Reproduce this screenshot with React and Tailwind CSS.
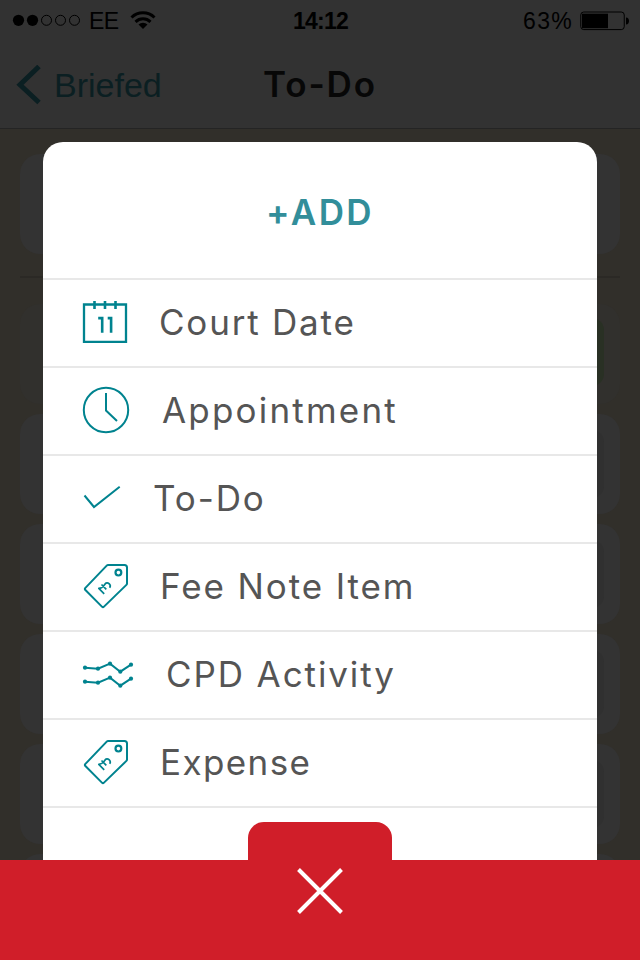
const ICON = 'fill-none stroke-[#00838f]';

const CalendarIcon = () => (
  <svg className={ICON} width="46" height="44" viewBox="0 0 46 44" strokeWidth="2.3">
    <path d="M2 4.5h42v37.300H2z" />
    <path d="M12.5 1v8M23 1v8M33.5 1v8" strokeWidth="2.6" />
    <path d="M16.2 18.100h4V32.800M25.700 18.100h3.400V32.800" strokeWidth="2.6" />
  </svg>
);

const ClockIcon = () => (
  <svg className={ICON} width="48" height="48" viewBox="0 0 48 48" strokeWidth="2">
    <circle cx="24" cy="24" r="22.2" />
    <path d="M24 7v17.500l11 10.500" />
  </svg>
);

const TickIcon = () => (
  <svg className={ICON} width="38" height="26" viewBox="0 0 38 26" strokeWidth="2">
    <path d="M1.500 10.500 11 22 36.700 1.800" />
  </svg>
);

const TagIcon = () => (
  <svg className={ICON} width="46" height="46" viewBox="0 0 46 46" strokeWidth="2" strokeLinejoin="round">
    <path d="M25.200 2H41.500a2.500 2.500 0 0 1 2.500 2.500V20.500a2 2 0 0 1-.6 1.400L21 43.600a1.500 1.500 0 0 1-2.100 0L2.400 27a1.500 1.500 0 0 1 0-2.100L23.700 2.600A2 2 0 0 1 25.200 2z" />
    <circle cx="35.4" cy="9.6" r="2.9" strokeWidth="2.2" />
    <g transform="translate(21.5 24.5) rotate(45) scale(.85)" strokeWidth="2">
      <path d="M4.500-4C4-8-3-8-2.500-3.500C-2 0-1 2-4 5.500H5M-5 0H3" />
    </g>
  </svg>
);

const POINTS = [[3, 6.7], [16, 7.7], [28, 2.7], [38.3, 10.7], [49, 3.7]];

const ActivityIcon = () => (
  <svg className="fill-[#00838f] stroke-[#00838f]" width="52" height="28" viewBox="0 0 52 28">
    {[0, 14].map((dy) => (
      <g key={dy} transform={`translate(0 ${dy})`}>
        <polyline points={POINTS.join(' ')} fill="none" strokeWidth="2" />
        {POINTS.map(([x, y]) => (
          <circle key={x} cx={x} cy={y} r="2.1" stroke="none" />
        ))}
      </g>
    ))}
  </svg>
);

const items = [
  { label: 'Court Date', Icon: CalendarIcon, icon: 'pl-[39px] w-[116px]', text: 'tracking-[1.8px]' },
  { label: 'Appointment', Icon: ClockIcon, icon: 'pl-[39px] w-[119px]', text: 'tracking-[2.2px]' },
  { label: 'To-Do', Icon: TickIcon, icon: 'pl-10 w-[110px]', text: 'tracking-[1.9px]' },
  { label: 'Fee Note Item', Icon: TagIcon, icon: 'pl-10 w-[117px]', text: 'tracking-[1.9px]' },
  { label: 'CPD Activity', Icon: ActivityIcon, icon: 'pl-[39px] w-[123px] pt-0.5', text: 'tracking-[1.9px]' },
  { label: 'Expense', Icon: TagIcon, icon: 'pl-10 w-[117px]', text: 'tracking-[1.4px]' },
];

const StatusBar = () => (
  <div className="grid grid-cols-3 items-center h-[42px] pl-3 pr-[11px] text-[23px] text-black">
    <div className="flex items-center">
      <svg className="mb-0.5" width="70" height="14" viewBox="0 0 70 14">
        {[0, 1, 2, 3, 4].map((i) => (
          <circle key={i} cx={6.5 + i * 14} cy="7.3" r={i < 2 ? 5.6 : 5} fill={i < 2 ? '#000' : 'none'} stroke={i < 2 ? 'none' : '#000'} />
        ))}
      </svg>
      <span className="ml-[7px] tracking-[-0.7px]">EE</span>
      <svg className="ml-3" width="26" height="20" viewBox="0 0 26 20" fill="none" stroke="#000" strokeWidth="3">
        <path d="M1.500 6.500a16.500 16.500 0 0 1 23 0" />
        <path d="M5.500 10.800a11 11 0 0 1 15 0" />
        <path d="M13 18 8.500 13.600a6.500 6.500 0 0 1 9 0z" fill="#000" stroke="none" />
      </svg>
    </div>
    <span className="text-center font-bold tracking-[-0.8px]">14:12</span>
    <div className="flex items-center justify-end">
      <span className="tracking-[1.3px]">63%</span>
      <svg className="ml-[7px] mb-px" width="49" height="20" viewBox="0 0 49 20">
        <rect x=".75" y="1" width="43.500" height="17.600" rx="3" fill="none" stroke="#000" />
        <rect x="2" y="2.700" width="26" height="14.500" />
        <path d="M46 6.500c4 0 4 7 0 7z" />
      </svg>
    </div>
  </div>
);

const Header = () => (
  <header className="h-[129px] bg-[#323232] border-b border-[#242424]">
    <StatusBar />
    <div className="grid grid-cols-3 items-center h-[86px] px-4">
      <div className="flex items-center text-[#0b1f22]">
        <svg width="26" height="40" viewBox="0 0 26 40" fill="none" stroke="currentColor" strokeWidth="5">
          <path d="M23 1.500 4 19.800 23 37.500" />
        </svg>
        <span className="ml-3 text-[34px]">Briefed</span>
      </div>
      <h1 className="text-center font-['Inter',sans-serif] font-semibold text-[35px] leading-[50px] pb-0.5 tracking-[1.9px] whitespace-nowrap text-[#070707]">To-Do</h1>
    </div>
  </header>
);

const BackgroundCard = () => (
  <div className="flex justify-end items-center shrink-0 h-[100px] pr-4 rounded-[20px] bg-[#333333]">
    <div className="w-20 h-[68px] rounded-xl bg-[#303030]" />
  </div>
);

const App = () => {
  return (
    <div className="relative flex flex-col w-[640px] h-[960px] overflow-hidden bg-[#312f2a] font-['Liberation_Sans',Arial,sans-serif]">
      <Header />

      {/* Dimmed list */}
      <main className="flex flex-col h-[731px] px-5 pt-[25px] overflow-hidden">
        <div className="shrink-0 h-[100px] rounded-[20px] bg-[#333333]" />
        <div className="shrink-0 h-0.5 mt-[22px] mb-[26px] bg-[#2b2925]" />
        <div className="flex flex-col gap-2.5">
          <div className="flex justify-end items-center shrink-0 h-[100px] pr-4 pb-1 rounded-[20px] bg-[#31302d]">
            <div className="w-20 h-[68px] rounded-xl bg-[#293024]" />
          </div>
          <BackgroundCard />
          <BackgroundCard />
          <BackgroundCard />
          <BackgroundCard />
          <BackgroundCard />
        </div>
      </main>

      <footer className="h-[100px] bg-[#d01e29]" />

      {/* Add sheet */}
      <div className="absolute left-[43px] top-[142px] w-[554px] h-[718px] rounded-t-[20px] bg-white font-['Inter',sans-serif]">
        <h2 className="h-[136px] text-center text-[35px] leading-[140px] font-semibold tracking-[2.4px] text-[#328e9a]">+ADD</h2>
        <ul className="border-b-2 border-[#e8e8e8]">
          {items.map(({ label, Icon, icon, text }) => (
            <li key={label} className="flex items-center h-[88px] pb-0.5 border-t-2 border-[#e8e8e8]">
              <span className={`shrink-0 ${icon}`}>
                <Icon />
              </span>
              <span className={`text-[35px] font-normal whitespace-nowrap text-[#555555] ${text}`}>{label}</span>
            </li>
          ))}
        </ul>
      </div>

      <button aria-label="Close" className="absolute left-[248px] top-[822px] flex justify-center w-36 h-[138px] pt-[45px] rounded-t-2xl bg-[#d01e29]">
        <svg width="48" height="48" viewBox="0 0 48 48" stroke="#fff" strokeWidth="4">
          <path d="M2.500 2.500 45.500 45.500M45.500 2.500 2.500 45.500" />
        </svg>
      </button>
    </div>
  );
};

export default App;
